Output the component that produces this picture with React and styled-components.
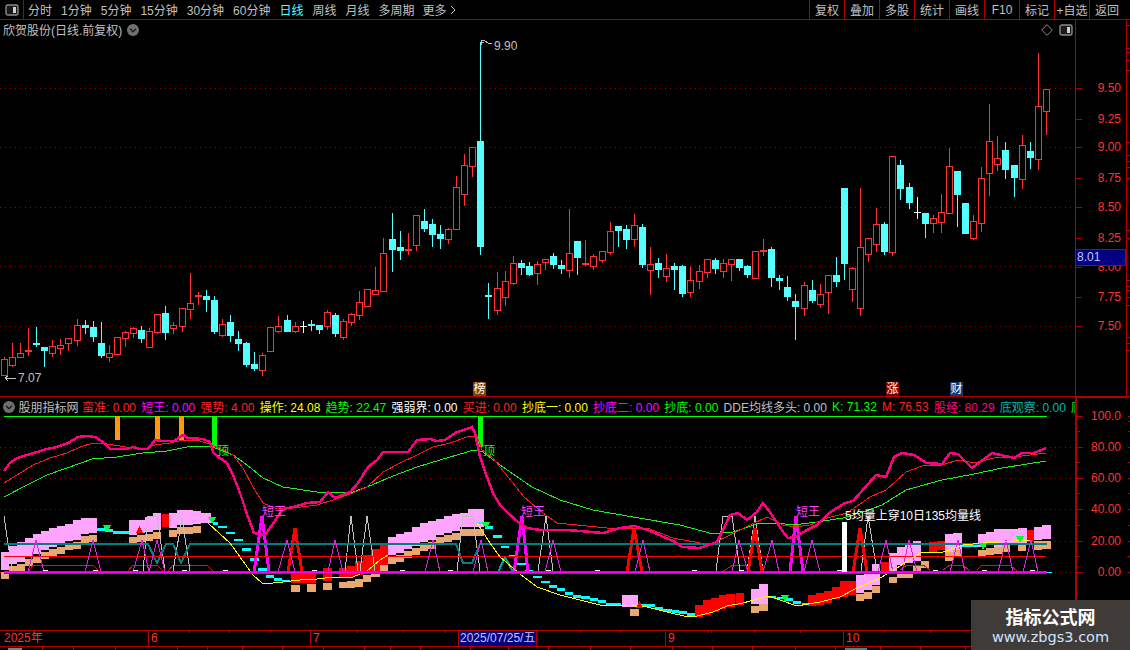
import React from "react";
import styled, { createGlobalStyle } from "styled-components";

const RED = "#ff3232";
const LINE = "#b00000";
const CYAN = "#54ffff";
const PINK = "#ffa4ff";
const TAN = "#e8a870";

const PERIODS = ["分时", "1分钟", "5分钟", "15分钟", "30分钟", "60分钟", "日线", "周线", "月线", "多周期"];
const ACTIONS = ["复权", "叠加", "多股", "统计", "画线", "F10", "标记", "+自选", "返回"];

const LEGEND = [
  ["蛮准: 0.00", "#ff2020"],
  ["短王: 0.00", "#ff00ff"],
  ["强势: 4.00", "#ff2020"],
  ["操作: 24.08", "#ffff00"],
  ["趋势: 22.47", "#00ff00"],
  ["强弱界: 0.00", "#ffffff"],
  ["买进: 0.00", "#ff2020"],
  ["抄底一: 0.00", "#ffff00"],
  ["抄底二: 0.00", "#ff00ff"],
  ["抄底: 0.00", "#00ff00"],
  ["DDE均线多头: 0.00", "#c0c0c0"],
  ["K: 71.32", "#00ff00"],
  ["M: 76.53", "#ff2020"],
  ["股经: 80.29", "#ff0080"],
  ["底观察: 0.00", "#00b4b4"],
  ["底", "#00ff00"],
];

// high, body top, body bottom, low (page y), kind: r up, c down, w flat
const CANDLES = [
  [357,359,375,375,"r"],[343,357,365,367,"r"],[343,353,357,357,"r"],[328,350,352,356,"r"],[327,343,344,347,"c"],
  [347,347,351,367,"c"],[340,346,353,357,"r"],[339,345,348,355,"r"],[338,338,343,351,"r"],[319,325,340,346,"r"],
  [320,325,328,334,"c"],[321,327,337,342,"c"],[322,343,356,358,"c"],[345,353,357,362,"r"],[337,337,354,355,"r"],
  [331,332,338,347,"r"],[327,328,333,338,"r"],[326,330,339,343,"c"],[328,331,347,347,"r"],[314,314,332,334,"r"],
  [306,313,333,340,"c"],[322,325,328,334,"r"],[308,308,326,332,"r"],[273,303,309,319,"r"],[292,295,297,305,"r"],
  [290,296,300,312,"c"],[296,300,332,334,"c"],[319,324,335,337,"r"],[315,322,336,342,"c"],[331,339,344,351,"c"],
  [342,343,365,367,"c"],[352,364,369,371,"c"],[353,355,370,376,"r"],[327,327,351,352,"r"],[316,326,331,333,"r"],
  [315,320,332,332,"c"],[322,326,331,333,"r"],[321,326,327,333,"w"],[320,324,326,331,"c"],[325,325,330,334,"c"],
  [310,312,326,330,"r"],[313,315,334,337,"c"],[319,321,337,340,"r"],[313,314,322,326,"r"],[291,302,315,320,"r"],
  [289,289,306,307,"r"],[267,290,294,295,"r"],[238,253,291,291,"r"],[213,239,250,272,"c"],[231,247,251,260,"c"],
  [233,249,250,255,"r"],[215,215,245,251,"r"],[209,221,229,232,"c"],[219,224,235,247,"c"],[225,234,239,249,"c"],
  [228,229,239,244,"r"],[176,187,229,229,"r"],[154,165,194,206,"r"],[147,147,166,177,"r"],[42,141,247,255,"c"],
  [283,295,297,319,"c"],[272,288,310,315,"r"],[271,281,297,306,"r"],[256,263,283,285,"r"],[260,263,268,275,"c"],
  [262,266,275,276,"c"],[261,264,273,285,"r"],[259,259,262,270,"r"],[253,256,265,269,"c"],[260,265,269,274,"c"],
  [209,253,270,278,"r"],[241,241,258,275,"c"],[240,263,265,266,"r"],[254,256,266,270,"r"],[251,251,260,263,"r"],
  [222,231,252,255,"r"],[226,226,231,247,"c"],[225,229,240,249,"c"],[214,225,239,247,"r"],[224,227,265,268,"c"],
  [247,264,270,295,"r"],[258,263,270,278,"c"],[254,268,276,282,"r"],[263,266,270,290,"c"],[265,266,294,297,"c"],
  [267,280,292,297,"r"],[265,271,281,289,"r"],[259,259,272,278,"r"],[258,260,269,274,"c"],[259,263,271,278,"r"],
  [259,259,264,281,"r"],[259,259,268,271,"c"],[265,266,275,278,"c"],[251,251,278,278,"r"],[239,250,251,256,"r"],
  [247,249,278,287,"c"],[275,278,281,290,"c"],[276,287,297,301,"c"],[294,301,307,340,"c"],[282,285,308,316,"r"],
  [280,290,301,303,"c"],[284,294,304,308,"r"],[275,275,292,314,"r"],[257,275,282,287,"c"],[188,188,264,280,"c"],
  [267,268,289,302,"r"],[188,247,308,316,"r"],[238,238,254,262,"r"],[208,224,244,252,"r"],[222,224,252,255,"c"],
  [156,156,252,256,"r"],[160,165,189,200,"c"],[183,187,203,209,"c"],[197,212,213,219,"w"],[213,213,224,238,"c"],
  [215,218,223,233,"r"],[194,212,222,233,"r"],[148,166,213,213,"r"],[171,171,195,227,"c"],[203,203,234,234,"c"],
  [215,221,238,240,"r"],[167,178,223,232,"r"],[104,141,173,196,"r"],[136,158,164,171,"r"],[142,150,170,179,"c"],
  [165,165,178,197,"c"],[135,145,179,189,"r"],[142,151,158,169,"c"],[53,106,159,170,"r"],[89,89,111,135,"r"],
];

const PRICE_GRID = [88, 147, 207, 266, 326];
const PRICE_LABELS = [["9.50",88],["9.25",119],["9.00",147],["8.75",178],["8.50",207],["8.25",238],["8.00",267],["7.75",297],["7.50",326]];
const PRICE_STRIP_TICKS = [25,48,52,60,70,142,155,161,167,178,230,238,280,286,290,297,305,337,343,350];
const INDICATOR_GRID = [447, 478, 509, 541, 572];
const INDICATOR_LABELS = [["100.0",416],["80.00",447],["60.00",478],["40.00",509],["20.00",541],["0.00",572]];
const INDICATOR_STRIP_TICKS = [416,421,431,447,462,478,493,509,525,541,556,572];

const PINK_LINE = [[4,471],[10,463],[17,458],[27,455],[37,452],[47,449],[57,447],[68,443],[78,437],[88,436],[95,437],[103,442],[110,449],[127,449],[133,447],[140,449],[148,449],[155,440],[163,441],[174,441],[183,435],[188,438],[203,439],[210,442],[213,452],[218,457],[227,463],[233,475],[240,493],[248,517],[254,533],[265,535],[270,528],[283,509],[293,507],[307,503],[320,502],[328,492],[335,498],[350,492],[358,483],[368,467],[377,460],[383,452],[408,452],[417,440],[430,439],[437,441],[445,440],[455,433],[472,427],[475,433],[480,457],[487,477],[493,493],[500,505],[507,512],[518,522],[527,528],[540,530],[567,530],[580,531],[603,533],[620,528],[635,526],[650,531],[673,541],[682,547],[700,548],[708,545],[717,542],[723,530],[730,515],[738,513],[747,520],[757,512],[763,503],[770,512],[783,532],[788,538],[795,537],[807,530],[817,525],[829,513],[845,503],[853,501],[876,475],[886,477],[894,457],[902,453],[914,455],[926,463],[942,464],[950,453],[958,454],[972,468],[992,453],[1014,458],[1022,453],[1034,453],[1046,448]];
const RED_LINE = [[4,483],[17,475],[33,465],[50,458],[67,453],[80,447],[93,443],[100,443],[113,445],[133,448],[147,448],[155,445],[170,443],[183,440],[200,441],[212,445],[223,450],[233,455],[243,468],[253,487],[263,503],[277,509],[293,508],[317,505],[333,500],[353,493],[367,487],[383,472],[400,463],[417,455],[433,447],[450,443],[467,437],[477,436],[482,450],[492,457],[500,467],[524,497],[543,513],[557,523],[607,528],[647,528],[673,538],[700,543],[713,543],[730,535],[750,525],[767,517],[783,525],[795,527],[810,525],[827,518],[847,513],[870,497],[886,490],[906,472],[922,466],[942,465],[958,460],[974,463],[994,458],[1014,457],[1046,453]];
const GREEN_LINE = [[4,497],[27,485],[47,475],[67,468],[92,459],[117,457],[143,453],[167,451],[187,447],[210,446],[233,455],[247,465],[263,478],[283,487],[317,492],[350,493],[367,487],[393,476],[417,467],[440,460],[467,452],[473,450],[483,452],[500,465],[532,487],[560,500],[593,510],[633,517],[680,525],[713,534],[733,532],[760,523],[777,523],[793,525],[817,522],[843,518],[863,512],[882,505],[906,490],[942,480],[974,474],[1002,468],[1046,461]];
const YELLOW_LINE = [[208,523],[230,543],[240,557],[253,575],[262,583],[273,583],[283,582],[300,580],[317,579],[333,577],[353,577],[367,571],[380,560],[388,555]];
const YELLOW_LINE_2 = [[477,523],[490,543],[500,557],[520,574],[537,587],[560,595],[580,600],[600,605],[620,605],[647,607],[667,612],[688,617],[697,616],[713,612],[727,606],[743,603],[768,596],[780,600],[797,606],[808,604],[820,602],[840,597],[853,590],[880,578],[897,568],[920,553],[943,552],[963,545],[983,543],[1030,540]];

const GRAY_SPIKES = [[[4,516],[12,571]],[[143,571],[148,516],[157,516],[165,571]],[[173,571],[182,518],[190,571]],[[345,571],[351,516],[358,571]],[[360,571],[367,516],[375,571]],[[457,571],[463,516],[473,516],[480,571]],[[538,571],[546,516],[553,571]],[[716,571],[723,516],[732,516],[740,571]],[[747,571],[755,516],[763,571]],[[861,571],[868,516],[877,571]]];
const MAGENTA_SPIKES = [[28,36,44],[85,93,101],[133,142,149],[149,157,165],[278,287,295],[328,335,343],[425,433,440],[473,481,488],[545,553,561],[635,643,650],[732,739,748],[763,772,779],[804,812,820],[878,886,893],[902,909,917],[950,958,965],[998,1006,1013],[1023,1031,1038]];
const THICK_MAGENTA = [[254,262,269],[514,522,528],[790,796,803]];
const THICK_RED = [[288,295,302],[627,634,642],[748,755,762],[853,860,867]];
const RED_HUMPS = [[[28,572],[33,565],[93,565],[100,572]],[[128,571],[133,565],[157,565],[163,571]],[[168,571],[173,565],[207,565],[213,571]],[[722,572],[733,565],[745,565],[752,572]],[[900,570],[907,565],[923,565],[930,570]],[[943,570],[950,565],[963,565],[970,571]],[[977,570],[982,565],[1010,565],[1017,571]]];
const TEAL_LINE = [[4,544],[148,544],[157,563],[166,544],[173,544],[181,563],[190,544],[456,544],[463,563],[472,563],[480,544],[1047,544]];
const WHITE_DASHES = [43,93,133,182,223,312,400,448,546,595,692,739,837,933,982,1030];

const stair = (start, tops, bottoms) =>
  tops.map((top, i) => ({ x: start + i * 8, top, bottom: bottoms[i] }));

const PINK_STAIRS = [
  ...stair(1, [552,546,542,538,534,531,528,526,524,520,518,518], [570,564,562,557,554,550,547,545,541,540,534,533]),
  ...stair(129, [520,520,517,513], [535,533,532,530]),
  ...stair(169, [513,510,510,511], [528,525,525,524]),
  ...stair(388, [537,534,532,527,523,521,519,516,514,513,509,509], [555,553,549,546,542,540,535,533,531,527,527,527]),
];
const PINK_BLOCKS = [[201,10,513,523],[622,16,595,607],[751,8,589,604],[759,9,584,604],[856,8,575,593],[864,8,574,590],[872,8,574,585],[872,8,564,573],[889,8,553,571],[897,8,547,565],[905,8,543,563],[913,8,541,561],[945,8,534,552],[953,9,533,550],[978,8,534,547],[986,8,532,545],[994,8,529,547],[1002,8,529,545],[1010,8,529,543],[1018,9,528,543],[1034,8,527,540],[1042,9,525,539]];
const TAN_BLOCKS = [[630,9,609,616],[751,8,606,613],[759,9,604,611],[291,9,585,592],[307,9,584,592],[323,9,583,590],[339,8,582,588],[347,8,581,588],[355,8,579,587],[363,8,575,582],[371,9,574,577],[380,8,565,571],[856,8,594,601],[864,8,592,599],[872,8,586,593],[889,8,577,583],[897,8,573,578],[905,8,572,578],[913,8,565,571],[921,8,561,568],[945,8,552,561],[953,9,550,557],[978,8,550,556],[986,8,548,555],[994,8,547,554],[1002,8,545,552],[1018,8,545,551],[1034,8,541,550],[1042,9,541,549]];
const RED_BLOCKS = [[162,7,514,527],[291,25,574,583],[323,9,568,581],[339,8,568,578],[347,8,566,577],[355,8,561,575],[363,8,555,573],[371,9,549,572],[380,8,545,565],[695,8,605,617],[703,8,600,615],[711,8,598,612],[719,7,595,609],[726,9,594,607],[736,8,593,605],[808,8,595,606],[816,8,593,605],[824,8,591,603],[832,8,587,599],[840,8,581,597],[848,8,581,595],[881,8,562,572],[929,8,542,552],[937,8,541,550],[1027,7,530,542]];
const CYAN_BLOCKS = [[97,8,528,3],[105,8,529,3],[113,8,531,3],[121,8,531,3],[213,5,522,3],[218,9,526,2],[226,9,532,2],[234,9,539,2],[242,9,548,3],[250,9,558,3],[258,9,568,3],[266,8,575,3],[274,8,578,3],[282,8,580,2],[477,8,522,2],[485,8,526,3],[493,9,535,3],[501,8,546,2],[509,9,555,2],[517,9,563,2],[525,8,570,2],[533,9,576,2],[541,9,581,2],[549,8,585,3],[557,8,588,3],[565,8,592,3],[573,8,595,3],[581,9,596,3],[590,8,598,3],[598,8,600,3],[606,15,603,3],[640,7,604,3],[647,8,604,3],[655,8,607,3],[663,9,609,3],[672,7,610,3],[679,8,611,3],[687,8,613,3],[768,8,596,2],[777,8,597,2],[785,8,598,3],[793,8,601,3],[802,7,603,2],[962,16,545,2],[1040,12,572,1]];
const DOWN_TRIANGLES = [[103,525],[208,517],[482,522],[781,595],[979,543],[1016,536]];
const UP_TRIANGLES = [[136,533],[636,608]];

const TIME_TICKS = [189,229,270,357,403,445,491,580,620,708,711,754,800,884,930,975];
const FOOT_TICKS = [42,73,115,177,207,242,282,323,364,390,420,470,508,548,590,630,672,712,752,795,835,880,920,965];

const points = (list) => list.map((p) => p.join(",")).join(" ");

const GlobalStyle = createGlobalStyle`
  html, body {
    margin: 0;
    padding: 0;
    background: #000;
  }
  body {
    font-family: "Liberation Sans", "Noto Sans CJK SC", sans-serif;
    font-size: 12px;
  }
`;

const Screen = styled.div`
  position: relative;
  display: flex;
  flex-direction: column;
  width: 1130px;
  height: 650px;
  overflow: hidden;
  background: #000;
  color: #c0c0c0;
`;

const Toolbar = styled.div`
  display: flex;
  align-items: stretch;
  height: 20px;
  box-sizing: border-box;
  border-bottom: 1px solid ${LINE};
`;

const ToggleCell = styled.div`
  display: flex;
  align-items: center;
  justify-content: center;
  width: 24px;
  box-sizing: border-box;
  border-right: 1px solid ${LINE};
`;

const PeriodList = styled.div`
  display: flex;
  align-items: center;
  gap: 9px;
  flex: 1;
  padding-left: 4px;
`;

const Period = styled.span`
  color: ${(p) => (p.$active ? CYAN : "#c0c0c0")};
  white-space: nowrap;
`;

const More = styled(Period)`
  display: flex;
  align-items: center;
  gap: 3px;
  margin-left: -1px;
`;

const ActionList = styled.div`
  display: flex;
  padding-right: 6px;
`;

const ActionButton = styled.div`
  display: flex;
  align-items: center;
  justify-content: center;
  width: 35px;
  box-sizing: border-box;
  border-left: 1px solid ${LINE};
  white-space: nowrap;
`;

const PricePanel = styled.div`
  display: flex;
  height: 377px;
  box-sizing: border-box;
  border-bottom: 1px solid ${LINE};
`;

const ChartArea = styled.div`
  position: relative;
  width: 1075px;
  flex: none;
`;

const ChartSvg = styled.svg`
  display: block;
`;

const TitleRow = styled.div`
  position: absolute;
  top: 2px;
  left: 3px;
  right: 2px;
  display: flex;
  align-items: center;
  gap: 5px;
  height: 15px;
`;

const TitleText = styled.span`
  white-space: nowrap;
`;

const TitleTools = styled.div`
  display: flex;
  align-items: center;
  gap: 6px;
  margin-left: auto;
`;

const PriceNote = styled.span`
  position: absolute;
  left: ${(p) => p.$x}px;
  top: ${(p) => p.$y - 20 - 7}px;
  line-height: 14px;
  color: #c0c0c0;
  white-space: nowrap;
`;

const Marker = styled.span`
  position: absolute;
  left: ${(p) => p.$x}px;
  top: 362px;
  width: 13px;
  height: 14px;
  line-height: 14px;
  text-align: center;
  color: #fff;
  background: ${(p) => p.$bg};
`;

const AxisColumn = styled.div`
  position: relative;
  width: 51px;
  flex: none;
  box-sizing: border-box;
  border-left: ${(p) => (p.$heavy ? 2 : 1)}px solid ${LINE};
  border-top: ${(p) => (p.$heavy ? 1 : 0)}px solid ${LINE};
`;

const AxisLabel = styled.span`
  position: absolute;
  right: 5px;
  top: ${(p) => p.$top}px;
  line-height: 14px;
  color: ${RED};
`;

const AxisSvg = styled.svg`
  position: absolute;
  top: 0;
  left: 0;
`;

const LastPrice = styled.div`
  position: absolute;
  top: 229px;
  left: 0;
  right: 0;
  height: 17px;
  box-sizing: border-box;
  padding-left: 1px;
  line-height: 15px;
  color: #c4c4ff;
  background: #000080;
  border: 1px solid ${LINE};
  border-left: 0;
`;

const Strip = styled.div`
  flex: 1;
  border-left: ${(p) => (p.$ruled ? `1px solid ${LINE}` : "0")};
`;

const StripSvg = styled.svg`
  display: block;
`;

const IndicatorPanel = styled.div`
  display: flex;
  height: 233px;
`;

const IndicatorBody = styled.div`
  position: relative;
  width: 1075px;
  flex: none;
  overflow: hidden;
`;

const Legend = styled.div`
  display: flex;
  align-items: center;
  gap: 5.2px;
  height: 19px;
  padding-left: 3px;
  white-space: nowrap;
  & > * {
    flex: none;
  }
`;

const LegendName = styled.span`
  margin: 0 -1.7px;
`;

const LegendItem = styled.span`
  color: ${(p) => p.$color};
`;

const Signal = styled.span`
  position: absolute;
  left: ${(p) => p.$x}px;
  top: ${(p) => p.$y - 397}px;
  line-height: 14px;
  color: ${(p) => p.$color};
  white-space: nowrap;
`;

const TimeAxis = styled.div`
  position: relative;
  height: 17px;
  box-sizing: border-box;
  border-top: 1px solid ${LINE};
  border-bottom: 1px solid ${LINE};
`;

const TimeLabel = styled.span`
  position: absolute;
  top: 0;
  bottom: 0;
  left: ${(p) => p.$x}px;
  padding-left: ${(p) => (p.$first ? 0 : 2)}px;
  line-height: 15px;
  color: ${RED};
  border-left: ${(p) => (p.$first ? 0 : 1)}px solid ${LINE};
`;

const CursorDate = styled.span`
  position: absolute;
  top: 0;
  bottom: 0;
  left: 458px;
  width: 79px;
  box-sizing: border-box;
  padding-left: 1px;
  line-height: 15px;
  color: #c4c4ff;
  background: #000080;
  border-left: 1px solid ${LINE};
  border-right: 1px solid ${LINE};
  white-space: nowrap;
`;

const FootStrip = styled.svg`
  display: block;
`;

const Watermark = styled.div`
  position: absolute;
  right: 0;
  bottom: 0;
  display: flex;
  flex-direction: column;
  align-items: center;
  width: 159px;
  height: 50px;
  box-sizing: border-box;
  background: #3f3b39;
`;

const WatermarkTitle = styled.span`
  margin-top: 4px;
  line-height: 24px;
  font-size: 18px;
  font-weight: 700;
  color: #fff;
  font-family: "Noto Sans CJK SC", sans-serif;
`;

const WatermarkUrl = styled.span`
  line-height: 18px;
  font-size: 14.5px;
  color: #cfe2ff;
  font-family: "DejaVu Sans", sans-serif;
`;

const PanelToggle = () => (
  <svg width="14" height="12" viewBox="0 0 14 12">
    <rect x="1" y="1" width="12" height="10" rx="2" fill="#1a1a1a" stroke="#8a8a8a" strokeWidth="1.4" />
    <rect x="8" y="3" width="3" height="6" fill="#d0d0d0" />
  </svg>
);

const CircleChevron = () => (
  <svg width="12" height="12" viewBox="0 0 12 12">
    <circle cx="6" cy="6" r="6" fill="#707070" />
    <path d="M3 4.8 L6 7.8 L9 4.8" fill="none" stroke="#1c1c1c" strokeWidth="1.3" />
  </svg>
);

const Diamond = () => (
  <svg width="12" height="12" viewBox="0 0 12 12">
    <path d="M6 .7 L11.3 6 L6 11.3 L.7 6 Z" fill="none" stroke="#8a8a8a" />
  </svg>
);

const Chevron = () => (
  <svg width="6" height="10" viewBox="0 0 6 10">
    <path d="M1 1 L5 5 L1 9" fill="none" stroke="#c0c0c0" />
  </svg>
);

const Candle = ({ index, data }) => {
  const [high, top, bottom, low, kind] = data;
  const cx = Math.floor(4.3 + 8.078 * index);
  const color = kind === "r" ? RED : kind === "c" ? CYAN : "#fff";
  const thin = bottom - top <= 2;
  return (
    <g>
      <line x1={cx + 0.5} x2={cx + 0.5} y1={high} y2={low} stroke={color} />
      {kind === "c" || thin ? (
        <rect x={cx - 3} y={top} width="7" height={Math.max(bottom - top, kind === "w" ? 1 : 2)} fill={color} />
      ) : (
        <rect x={cx - 2.5} y={top + 0.5} width="6" height={bottom - top} fill="#000" stroke={color} />
      )}
    </g>
  );
};

const Dots = ({ rows }) =>
  rows.map((y) => (
    <line key={y} x1="0" x2="1075" y1={y + 0.5} y2={y + 0.5} stroke="#a00000" strokeDasharray="1 4" />
  ));

const PriceChart = () => (
  <ChartSvg width="1075" height="376" viewBox="0 20 1075 376" shapeRendering="crispEdges">
    <Dots rows={PRICE_GRID} />
    {CANDLES.map((c, i) => (
      <Candle key={i} index={i} data={c} />
    ))}
    <path d="M481 45 V40 H485 M481 42 H484 M485 41 L488 43 L492 44" fill="none" stroke="#c0c0c0" />
    <path d="M5 378 H16 M5 378 L8 376 M5 378 L8 381" fill="none" stroke="#c0c0c0" />
  </ChartSvg>
);

const Block = ({ item, color }) => (
  <rect x={item[0]} y={item[2]} width={item[1]} height={item[3] - item[2]} fill={color} />
);

const IndicatorChart = () => (
  <ChartSvg width="1075" height="214" viewBox="0 416 1075 214" shapeRendering="crispEdges">
    <Dots rows={INDICATOR_GRID} />
    <line x1="4" x2="1047" y1="416.5" y2="416.5" stroke="#00ff00" />

    {PINK_STAIRS.map((b) => (
      <g key={`s${b.x}`}>
        <rect x={b.x} y={b.top} width="8" height={b.bottom - b.top} fill={PINK} />
        <rect x={b.x} y={b.bottom + 2} width="8" height="7" fill={TAN} />
      </g>
    ))}
    {PINK_BLOCKS.map((b, i) => <Block key={`p${i}`} item={b} color={PINK} />)}
    {TAN_BLOCKS.map((b, i) => <Block key={`t${i}`} item={b} color={TAN} />)}
    {RED_BLOCKS.map((b, i) => <Block key={`r${i}`} item={b} color="#ff0000" />)}
    {CYAN_BLOCKS.map((b, i) => (
      <rect key={`c${i}`} x={b[0]} y={b[2]} width={b[1]} height={b[3]} fill="#00ffff" />
    ))}

    {RED_HUMPS.map((h, i) => (
      <polyline key={`h${i}`} points={points(h)} fill="none" stroke="#c02020" />
    ))}
    {GRAY_SPIKES.map((s, i) => (
      <polyline key={`g${i}`} points={points(s)} fill="none" stroke="#c0c0c0" />
    ))}
    {THICK_RED.map((s) => (
      <polyline key={`tr${s[1]}`} points={`${s[0]},572 ${s[1]},528 ${s[2]},572`} fill="none" stroke="#ff0000" strokeWidth="3" />
    ))}
    {THICK_MAGENTA.map((s) => (
      <polyline key={`tm${s[1]}`} points={`${s[0]},572 ${s[1]},516 ${s[2]},572`} fill="none" stroke="#ff00ff" strokeWidth="3" />
    ))}
    <polyline points={points(TEAL_LINE)} fill="none" stroke="#008080" strokeWidth="2" />
    <polyline points="498,572 505,557 513,572" fill="none" stroke="#00a0a0" strokeWidth="2" />
    <line x1="4" x2="1046" y1="556.5" y2="556.5" stroke="#ff0000" />
    {MAGENTA_SPIKES.map((s) => (
      <polyline key={`m${s[1]}`} points={`${s[0]},572 ${s[1]},540 ${s[2]},572`} fill="none" stroke="#e020e0" />
    ))}

    <polyline points={points(YELLOW_LINE)} fill="none" stroke="#ffff00" />
    <polyline points={points(YELLOW_LINE_2)} fill="none" stroke="#ffff00" />

    {WHITE_DASHES.map((x) => (
      <rect key={`w${x}`} x={x} y="570" width="5" height="1" fill="#fff" />
    ))}
    <rect x="4" y="573" width="1043" height="1" fill="#ff0000" />
    <rect x="4" y="572" width="1043" height="1" fill="#ff00ff" />
    <rect x="4" y="571" width="1043" height="1" fill="#008080" />

    {DOWN_TRIANGLES.map(([x, y]) => (
      <path key={`dt${x}`} d={`M${x} ${y} h8 l-4 7 Z`} fill="#00ff30" />
    ))}
    {UP_TRIANGLES.map(([x, y]) => (
      <path key={`ut${x}`} d={`M${x} ${y} h7 l-3.5 -7 Z`} fill="#ff0000" />
    ))}

    <rect x="115" y="416" width="5" height="24" fill="#ff9a10" />
    <rect x="155" y="416" width="5" height="24" fill="#ff9a10" />
    <rect x="179" y="416" width="5" height="24" fill="#ff9a10" />
    <rect x="212" y="416" width="5" height="31" fill="#00ff00" />
    <rect x="478" y="416" width="5" height="31" fill="#00ff00" />
    <rect x="842" y="522" width="5" height="50" fill="#fff" />

    <polyline points={points(GREEN_LINE)} fill="none" stroke="#20f020" />
    <polyline points={points(RED_LINE)} fill="none" stroke="#ff1a1a" />
    <polyline points={points(PINK_LINE)} fill="none" stroke="#ff0080" strokeWidth="2.5" />
  </ChartSvg>
);

const ticksFor = (labels, extra, height, offset) => (
  <AxisSvg width="50" height={height} shapeRendering="crispEdges">
    {labels.map(([, y]) => (
      <rect key={y} x="0" y={y - offset} width="6" height="1" fill={LINE} />
    ))}
    {extra.map((y) => (
      <rect key={y} x="0" y={y - offset} width="3" height="1" fill={LINE} />
    ))}
  </AxisSvg>
);

export default function App() {
  return (
    <Screen>
      <GlobalStyle />
      <Toolbar>
        <ToggleCell>
          <PanelToggle />
        </ToggleCell>
        <PeriodList>
          {PERIODS.map((p) => (
            <Period key={p} $active={p === "日线"}>{p}</Period>
          ))}
          <More>更多 <Chevron /></More>
        </PeriodList>
        <ActionList>
          {ACTIONS.map((a) => (
            <ActionButton key={a}>{a}</ActionButton>
          ))}
        </ActionList>
      </Toolbar>

      <PricePanel>
        <ChartArea>
          <PriceChart />
          <TitleRow>
            <TitleText>欣贺股份(日线.前复权)</TitleText>
            <CircleChevron />
            <TitleTools>
              <Diamond />
              <PanelToggle />
            </TitleTools>
          </TitleRow>
          <PriceNote $x={494} $y={46}>9.90</PriceNote>
          <PriceNote $x={18} $y={378}>7.07</PriceNote>
          <Marker $x={473} $bg="#804000">榜</Marker>
          <Marker $x={886} $bg="#800000">涨</Marker>
          <Marker $x={950} $bg="#0a3a70">财</Marker>
        </ChartArea>
        <AxisColumn>
          {ticksFor(PRICE_LABELS, [], 376, 20)}
          {PRICE_LABELS.map(([text, y]) => (
            <AxisLabel key={text} $top={y - 27}>{text}</AxisLabel>
          ))}
          <LastPrice>8.01</LastPrice>
        </AxisColumn>
        <Strip $ruled>
          <StripSvg width="4" height="376" shapeRendering="crispEdges">
            {PRICE_STRIP_TICKS.map((y) => (
              <rect key={y} x="0" y={y - 20} width="3" height="1" fill={LINE} />
            ))}
          </StripSvg>
        </Strip>
      </PricePanel>

      <IndicatorPanel>
        <IndicatorBody>
          <Legend>
            <CircleChevron />
            <LegendName>股朋指标网</LegendName>
            {LEGEND.map(([text, color]) => (
              <LegendItem key={text} $color={color}>{text}</LegendItem>
            ))}
          </Legend>
          <IndicatorChart />
          <Signal $x={217} $y={444} $color="#00ff00">顶</Signal>
          <Signal $x={483} $y={444} $color="#00ff00">顶</Signal>
          <Signal $x={262} $y={505} $color="#ff40ff">短王</Signal>
          <Signal $x={521} $y={505} $color="#ff40ff">短王</Signal>
          <Signal $x={796} $y={505} $color="#ff40ff">短王</Signal>
          <Signal $x={845} $y={509} $color="#ffffff">5均量上穿10日135均量线</Signal>
        </IndicatorBody>
        <AxisColumn $heavy>
          {ticksFor(INDICATOR_LABELS, [431, 462, 493, 525, 556], 232, 398)}
          {INDICATOR_LABELS.map(([text, y]) => (
            <AxisLabel key={text} $top={y - 405}>{text}</AxisLabel>
          ))}
        </AxisColumn>
        <Strip>
          <StripSvg width="4" height="233" shapeRendering="crispEdges">
            {INDICATOR_STRIP_TICKS.map((y) => (
              <rect key={y} x="2" y={y - 397} width="2" height="1" fill={LINE} />
            ))}
          </StripSvg>
        </Strip>
      </IndicatorPanel>

      <TimeAxis>
        <AxisSvg width="1130" height="4" shapeRendering="crispEdges">
          {TIME_TICKS.map((x) => (
            <rect key={x} x={x} y="0" width="1" height="2" fill={LINE} />
          ))}
        </AxisSvg>
        <TimeLabel $x={4} $first>2025年</TimeLabel>
        <TimeLabel $x={148}>6</TimeLabel>
        <TimeLabel $x={310}>7</TimeLabel>
        <TimeLabel $x={665}>9</TimeLabel>
        <TimeLabel $x={843}>10</TimeLabel>
        <CursorDate>2025/07/25/五</CursorDate>
      </TimeAxis>
      <FootStrip width="1130" height="3" shapeRendering="crispEdges">
        {FOOT_TICKS.map((x) => (
          <rect key={x} x={x} y="0" width="1" height="3" fill={LINE} />
        ))}
        <rect x="8" y="1" width="14" height="2" fill="#808080" />
        <rect x="845" y="1" width="22" height="2" fill="#2a9090" />
      </FootStrip>

      <Watermark>
        <WatermarkTitle>指标公式网</WatermarkTitle>
        <WatermarkUrl>www.zbgs3.com</WatermarkUrl>
      </Watermark>
    </Screen>
  );
}
